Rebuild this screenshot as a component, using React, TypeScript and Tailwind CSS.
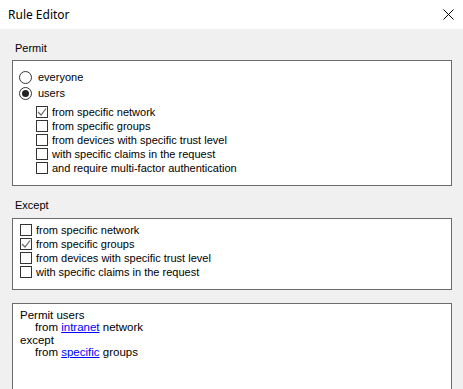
import React from "react";

const ui = { fontFamily: '"Liberation Sans", Arial, sans-serif' };

function Radio({ checked, label }: { checked?: boolean; label: string }) {
  return (
    <div className="flex h-[16px] items-center">
      <span className="flex h-[13px] w-[13px] items-center justify-center rounded-full border border-[#333333] bg-white">
        {checked && <span className="h-[7px] w-[7px] rounded-full bg-[#222222]" />}
      </span>
      <span className="ml-[6px] text-[11px] leading-none text-black">{label}</span>
    </div>
  );
}

function Check({ checked, label }: { checked?: boolean; label: string }) {
  return (
    <div className="flex h-[14px] items-center">
      <span className="flex h-[12px] w-[12px] items-center justify-center border border-[#333333] bg-white">
        {checked && (
          <svg width="10" height="10" viewBox="0 0 10 10" fill="none">
            <path d="M1 5L4 8L9 1.5" stroke="#666666" strokeWidth="1.2" />
          </svg>
        )}
      </span>
      <span className="ml-[4px] text-[11px] leading-none text-black">{label}</span>
    </div>
  );
}

export default function App() {
  return (
    <div className="flex h-[389px] w-[463px] flex-col overflow-hidden bg-[#f0f0f0]" style={ui}>
      {/* Title bar */}
      <div className="flex h-[29px] shrink-0 items-center justify-between bg-white pl-[8px] pr-[9px]">
        <span className="text-[12px] text-black" style={{ fontFamily: '"Noto Sans", sans-serif' }}>
          Rule Editor
        </span>
        <svg width="11" height="11" viewBox="0 0 11 11" fill="none">
          <path d="M0.5 0.5L10.5 10.5M10.5 0.5L0.5 10.5" stroke="#000000" strokeWidth="1" />
        </svg>
      </div>

      <div className="flex shrink-0 flex-col pl-[12px] pr-[11px]">
        {/* Permit */}
        <div className="mt-[12px] flex h-[14px] shrink-0 items-center pl-[3px] text-[11px] text-black">Permit</div>
        <div className="mt-[5px] h-[126px] shrink-0 border border-[#6b6b6b] bg-white pt-[8px] pl-[6px]">
          <Radio label="everyone" />
          <Radio checked label="users" />
          <div className="mt-[4px] pl-[17px]">
            <Check checked label="from specific network" />
            <Check label="from specific groups" />
            <Check label="from devices with specific trust level" />
            <Check label="with specific claims in the request" />
            <Check label="and require multi-factor authentication" />
          </div>
        </div>

        {/* Except */}
        <div className="mt-[12px] flex h-[14px] shrink-0 items-center pl-[3px] text-[11px] text-black">Except</div>
        <div className="mt-[6px] h-[72px] shrink-0 border border-[#6b6b6b] bg-white pt-[4px] pl-[7px]">
          <Check label="from specific network" />
          <Check checked label="from specific groups" />
          <Check label="from devices with specific trust level" />
          <Check label="with specific claims in the request" />
        </div>

        {/* Summary */}
        <div className="mt-[13px] h-[110px] shrink-0 border border-[#6b6b6b] bg-white pt-[5px] pl-[7px] text-[11.5px] leading-[12.4px] text-black">
          <div>Permit users</div>
          <div className="pl-[15px]">
            from <span className="text-[#0000ff] underline">intranet</span> network
          </div>
          <div>except</div>
          <div className="pl-[15px]">
            from <span className="text-[#0000ff] underline">specific</span> groups
          </div>
        </div>
      </div>
    </div>
  );
}
